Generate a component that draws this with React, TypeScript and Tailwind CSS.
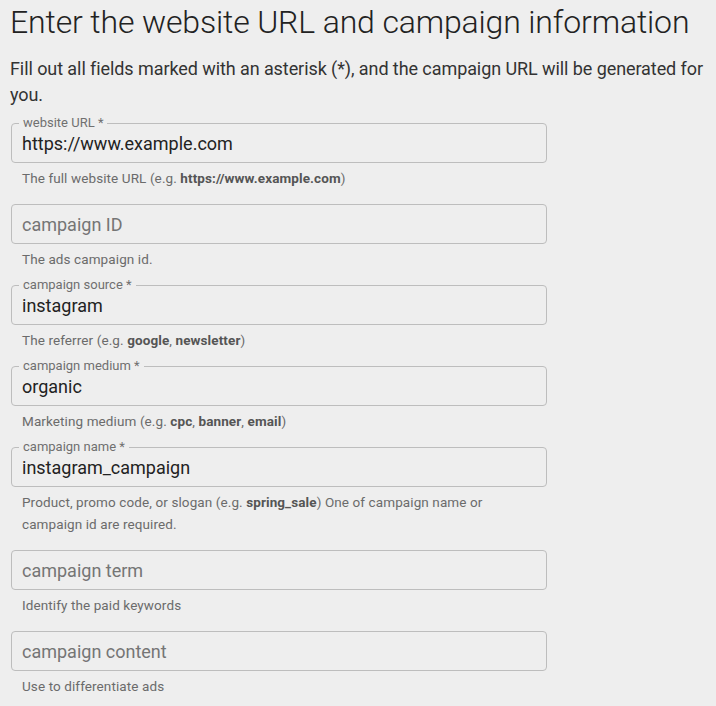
import type { ReactNode } from "react";

type Field = {
  label: string;
  required?: boolean;
  value?: string;
  helper: ReactNode;
};

const B = ({ children }: { children: ReactNode }) => (
  <b className="font-bold text-[#555]">{children}</b>
);

const fields: Field[] = [
  {
    label: "website URL",
    required: true,
    value: "https://www.example.com",
    helper: (
      <>
        The full website URL (e.g. <B>https://www.example.com</B>)
      </>
    ),
  },
  { label: "campaign ID", helper: "The ads campaign id." },
  {
    label: "campaign source",
    required: true,
    value: "instagram",
    helper: (
      <>
        The referrer (e.g. <B>google</B>, <B>newsletter</B>)
      </>
    ),
  },
  {
    label: "campaign medium",
    required: true,
    value: "organic",
    helper: (
      <>
        Marketing medium (e.g. <B>cpc</B>, <B>banner</B>, <B>email</B>)
      </>
    ),
  },
  {
    label: "campaign name",
    required: true,
    value: "instagram_campaign",
    helper: (
      <>
        Product, promo code, or slogan (e.g. <B>spring_sale</B>) One of
        campaign name or campaign id are required.
      </>
    ),
  },
  { label: "campaign term", helper: "Identify the paid keywords" },
  { label: "campaign content", helper: "Use to differentiate ads" },
];

function TextField({ field }: { field: Field }) {
  const filled = !!field.value;
  return (
    <div className="mb-[15px]">
      <div className="relative flex h-10 w-[536px] items-center rounded border border-[#bdbdbd] px-[10px]">
        {filled && (
          <span className="absolute -top-[9px] left-[7px] bg-[#eeeeee] px-[4px] text-[13px] leading-4 text-[#707070]">
            {field.label}
            {field.required && " *"}
          </span>
        )}
        <span
          className={
            filled
              ? "pt-px text-[18px] text-[#222]"
              : "pt-px text-[18px] text-[#757575]"
          }
        >
          {filled ? field.value : field.label}
        </span>
      </div>
      <p className="w-[480px] pl-[11px] pt-[4px] text-[13.5px] leading-[22px] tracking-[0.1px] text-[#6b6b6b]">
        {field.helper}
      </p>
    </div>
  );
}

export default function App() {
  return (
    <div className="min-h-[706px] bg-[#eeeeee] pl-[10px] font-['Roboto',sans-serif]">
      <h1 className="pt-[2px] text-[32px] leading-[40px] font-light tracking-[-0.15px] text-[#222]">
        Enter the website URL and campaign information
      </h1>
      <p className="mt-[14px] text-[18px] leading-[26px] tracking-[-0.08px] text-[#333]">
        Fill out all fields marked with an asterisk (*), and the campaign URL
        will be generated for you.
      </p>
      <div className="mt-[15px] pl-px">
        {fields.map((f) => (
          <TextField key={f.label} field={f} />
        ))}
      </div>
    </div>
  );
}
